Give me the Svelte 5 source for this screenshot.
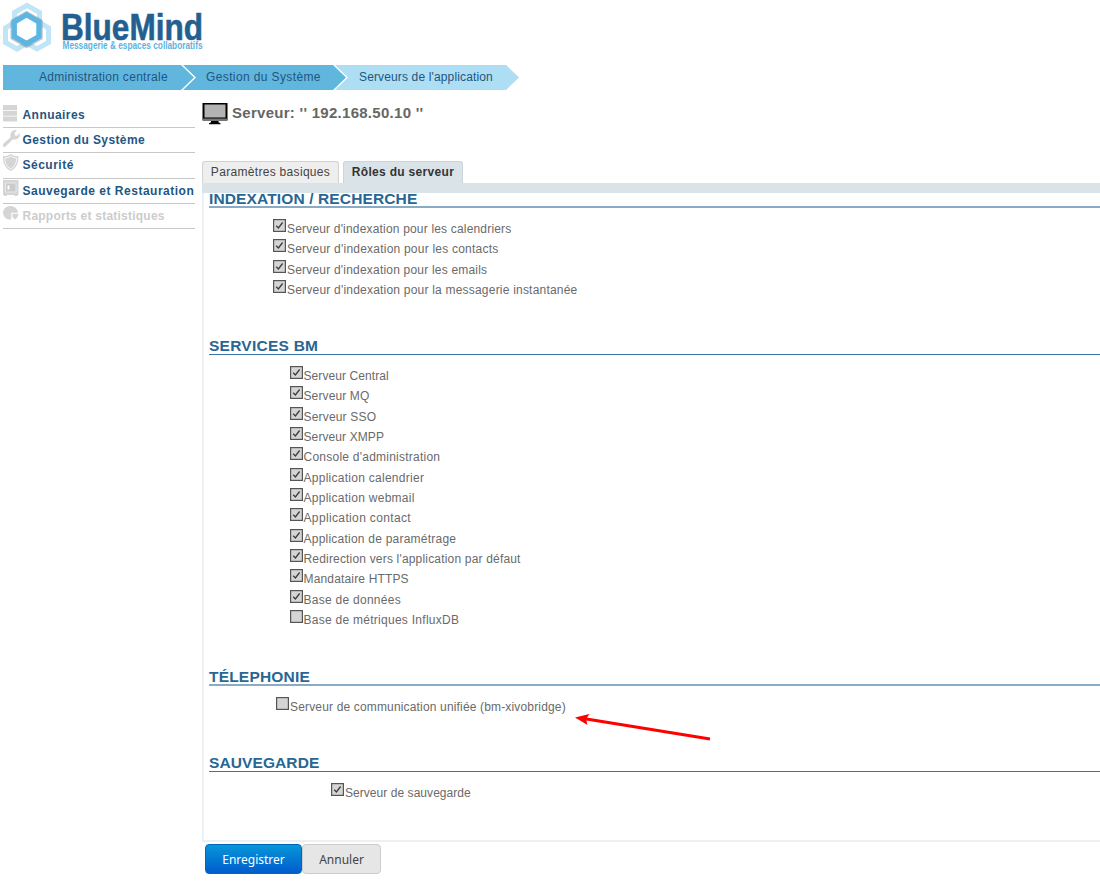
<script>
  const menu = [
    { icon: 'list', label: 'Annuaires', ls: 0.45 },
    { icon: 'wrench', label: 'Gestion du Système', ls: 0.4 },
    { icon: 'shield', label: 'Sécurité', ls: 0.5 },
    { icon: 'safe', label: 'Sauvegarde et Restauration', ls: 0.5 },
    { icon: 'pie', label: 'Rapports et statistiques', ls: 0.23, off: true }
  ];
  // Each item: label, checked, letter spacing in px
  const sections = [
    { title: 'INDEXATION / RECHERCHE', cls: 'index', ls: 0.13, items: [
      ["Serveur d'indexation pour les calendriers", true, 0.18],
      ["Serveur d'indexation pour les contacts", true, 0.22],
      ["Serveur d'indexation pour les emails", true, 0.2],
      ["Serveur d'indexation pour la messagerie instantanée", true, 0.21]
    ] },
    { title: 'SERVICES BM', cls: 'services', ls: 0.25, items: [
      ['Serveur Central', true, 0.08],
      ['Serveur MQ', true, 0.12],
      ['Serveur SSO', true, 0.18],
      ['Serveur XMPP', true, 0.1],
      ["Console d'administration", true, 0.24],
      ['Application calendrier', true, 0.27],
      ['Application webmail', true, 0.27],
      ['Application contact', true, 0.36],
      ['Application de paramétrage', true, 0.23],
      ["Redirection vers l'application par défaut", true, 0.18],
      ['Mandataire HTTPS', true, 0.16],
      ['Base de données', true, 0.27],
      ['Base de métriques InfluxDB', false, 0.27]
    ] },
    { title: 'TÉLEPHONIE', cls: 'phone', ls: 0.2, items: [
      ['Serveur de communication unifiée (bm-xivobridge)', false, 0.16]
    ] },
    { title: 'SAUVEGARDE', cls: 'backup', ls: 0.1, items: [['Serveur de sauvegarde', true, 0.05]] }
  ];
</script>

<div class="page">
  <header>
    <svg width="230" height="62" viewBox="0 0 230 62">
      <g fill="none" stroke="#bfe5f6" stroke-width="5">
        <path d="M27 5.300 39.500 12.500V27L27 34 14.500 27V12.500Z" />
        <path d="M17 21 28 28V42.500L17 49 5.500 42.500V28Z" />
        <path d="M37 21 48.500 28V42.500L37 49 25.500 42.500V28Z" />
      </g>
      <path d="M26.600 14.800 39.200 22V37L26.600 44.300 14 37V22Z" fill="none" stroke="#61717c" stroke-opacity=".4" stroke-width="7" />
      <path d="M26.600 14.800 38.900 22V36.500L26.600 43.500 14.300 36.500V22Z" fill="#fff" stroke="#5db5e2" stroke-width="5.200" />
      <text x="61" y="39.500" class="brand" textLength="142" lengthAdjust="spacingAndGlyphs">BlueMind</text>
      <text x="62.500" y="49.300" class="slogan" textLength="140" lengthAdjust="spacingAndGlyphs">Messagerie &amp; espaces collaboratifs</text>
    </svg>
  </header>

  <nav class="crumbs">
    <span class="crumb one">Administration centrale</span>
    <span class="crumb two">Gestion du Système</span>
    <span class="crumb three">Serveurs de l'application</span>
  </nav>

  <div class="columns">
    <aside>
      {#each menu as m}
        <div class="entry" class:off={m.off}>
          <svg width="18" height="19" viewBox="0 0 18 19" fill="#d5d5d5">
            {#if m.icon === 'list'}
              <path d="M0 0h14v5.300H0zM0 6h14v4.800H0zM0 11.500h14v5H0z" />
            {:else if m.icon === 'wrench'}
              <path d="M.6 17.800Q-.5 17 0 15L7.600 8.200Q6.700 4.500 9.200 2.300 11.400.500 14 1.200L11.400 4.100 12 6.400 14.200 6.700 16.700 4Q17.400 7.200 15 9.300 12.700 11 10 10.300L2.500 17.600Q1.500 18.300.6 17.800Z" />
            {:else if m.icon === 'shield'}
              <path d="M7.700 0Q10.500 2.300 15.400 2.300 15.900 13 7.700 17-.5 13 0 2.300 4.700 2.300 7.700 0Z" />
              <path d="M7.700 2.200Q10.200 3.900 13.700 4 13.600 11.800 7.700 15 1.800 11.800 1.700 4 5.200 3.900 7.700 2.200Z" fill="none" stroke="#fff" stroke-width=".8" />
            {:else if m.icon === 'safe'}
              <path d="M0 0h15.500v15H0z" />
              <path d="M2.500 3h10.500v9H2.500z" fill="#cbcbcb" stroke="#efefef" stroke-width=".8" />
              <path d="M4.500 5.500h2v4h-2z" fill="#fff" />
              <path d="M1 15h3v1H1zM11.500 15h3v1h-3z" />
            {:else}
              <path d="M7.200 1A7.300 7 0 0 1 15 7.700H8.200V14.500A7 6.800 0 1 1 7.200 1Z" />
              <path d="M9.300 8.700H15.500Q15.200 12.500 11.800 14.500L9.300 11.500Z" />
            {/if}
          </svg>
          <span style:letter-spacing="{m.ls}px">{m.label}</span>
        </div>
      {/each}
    </aside>

    <main>
      <h1>
        <svg width="26" height="23" viewBox="0 0 26 23">
          <path d="M.5 0h25v17H.5z" fill="#000" />
          <path d="M2.500 1.500h21v13h-21z" fill="#b3b3b3" />
          <path d="M.5 15.500h25V18H.5z" fill="#777" />
          <path d="M9 18h7.500v1.300l2 1v1H7v-1l2-1z" fill="#000" />
        </svg>
        <span>Serveur: '' 192.168.50.10 ''</span>
      </h1>
      <div class="tabs">
        <div class="tab">Paramètres basiques</div>
        <div class="tab active">Rôles du serveur</div>
      </div>
      <div class="strip"></div>
      <div class="panel">
        {#each sections as s}
          <section class={s.cls}>
            <h2 style:letter-spacing="{s.ls}px">{s.title}</h2>
            <div class="items">
              {#each s.items as [label, on, ls]}
                <div class="item">
                  <svg width="13" height="13" viewBox="0 0 13 13">
                    <rect x=".6" y=".6" width="11.800" height="11.800" fill="#d5d5d5" stroke="#555" stroke-width="1.200" />
                    {#if on}<path d="M3.200 6.700 5.400 8.900 9.600 3.500" fill="none" stroke="#3c3c3c" stroke-width="1.300" />{/if}
                  </svg>
                  <span style:letter-spacing="{ls}px">{label}</span>
                </div>
              {/each}
            </div>
            {#if s.cls === 'phone'}
              <svg class="arrow" width="140" height="32" viewBox="0 0 140 32">
                <path d="M10 4.800 135 25" stroke="#f00" stroke-width="3" />
                <path d="M0 3.500 14.500 0 11 5 12.500 11Z" fill="#f00" />
              </svg>
            {/if}
          </section>
        {/each}
      </div>
      <div class="buttons">
        <button class="save">Enregistrer</button><button class="cancel">Annuler</button>
      </div>
    </main>
  </div>
</div>

<style>
  :global(body) { background: #fff; overflow: hidden; }
  .page { width: 1100px; height: 892px; overflow: hidden; font: 12px "Liberation Sans", Arial, sans-serif; color: #6a6a6a; }
  header { height: 65px; }
  header svg { display: block; overflow: visible; }
  .brand { font: bold 37px "Liberation Sans", sans-serif; fill: #245f8f; stroke: #245f8f; stroke-width: .6px; }
  .slogan { font: bold 10.500px "Liberation Sans", sans-serif; fill: #5db3df; }
  .crumbs { display: flex; height: 25px; margin-left: 3px; line-height: 25px; color: #22557f; }
  .crumb { box-sizing: border-box; height: 25px; white-space: nowrap; background: #61b6de; }
  .one { width: 191px; padding-left: 36px; letter-spacing: .3px; clip-path: polygon(0 0, 178px 0, 191px 50%, 178px 100%, 0 100%); }
  .two { width: 163px; margin-left: -11px; padding-left: 23px; letter-spacing: .38px; clip-path: polygon(0 0, 150px 0, 163px 50%, 150px 100%, 0 100%, 13px 50%); }
  .three { width: 184px; margin-left: -11px; padding-left: 24px; letter-spacing: .14px; background: #addef3; clip-path: polygon(0 0, 171px 0, 184px 50%, 171px 100%, 0 100%, 13px 50%); }
  .columns { display: flex; }
  aside { width: 192px; margin-left: 3px; padding-top: 13px; flex: none; }
  .entry { display: flex; height: 25.200px; box-sizing: border-box; border-bottom: 1px solid #c8c8c8; color: #1f5682; font-weight: bold; white-space: nowrap; }
  .entry svg { flex: none; margin-right: 1.500px; margin-top: 2px; }
  .entry:not(:first-child) svg { margin-top: 1px; }
  .entry span { line-height: 25px; }
  .entry.off { color: #ccc; }
  main { width: 898px; margin-left: 7px; flex: none; }
  h1 { display: flex; height: 71px; box-sizing: border-box; margin: 0; padding-top: 12px; font-size: 15px; line-height: 21px; color: #666; letter-spacing: .28px; }
  h1 svg { margin-right: 4px; margin-top: 1px; }
  .tabs { display: flex; gap: 4px; height: 22px; }
  .tab { box-sizing: border-box; width: 137px; height: 22px; border: 1px solid #d2d2d2; border-bottom: 0; border-radius: 3px 3px 0 0; background: #eee; color: #444; text-align: center; line-height: 21px; letter-spacing: .31px; white-space: nowrap; }
  .tab.active { width: 120px; background: #dae3e8; border-color: #ccd5da; color: #333; font-weight: bold; }
  .strip { height: 10px; background: #dae3e8; }
  .panel { box-sizing: border-box; height: 649px; display: flex; flex-direction: column; border-left: 2px solid #ebf0f4; border-bottom: 2px solid #ebf0f4; padding-left: 5px; }
  section { position: relative; }
  h2 { box-sizing: border-box; height: 18px; margin: 0; border-bottom: 1px solid #3a76a2; color: #286694; font-size: 15.500px; line-height: 18px; white-space: nowrap; }
  .index h2, .phone h2 { border-bottom: 2px solid #8aabc5; }
  .index { height: 147px; margin-top: -3px; }
  .services { height: 331px; }
  .phone { height: 86px; }
  .index .items { padding-left: 64px; }
  .services .items { padding-left: 80.500px; }
  .phone .items { padding-left: 67px; }
  .backup .items { padding-left: 122px; }
  .items { padding-top: 11px; }
  .item { display: flex; height: 20.350px; white-space: nowrap; }
  .item svg { flex: none; margin-right: 1px; }
  .item span { line-height: 20px; }
  .arrow { position: absolute; left: 365.500px; top: 45.500px; }
  .buttons { display: flex; padding: 2px 0 0 3px; }
  button { box-sizing: border-box; height: 30px; padding: 0; border: 1px solid #ccc; border-radius: 4px; font: 12px "Noto Sans", sans-serif; }
  .save { width: 97px; color: #fff; border-color: #0068b8; background: linear-gradient(#0796d9, #005ccc); }
  .cancel { width: 79px; color: #444; background: #e6e6e6; }
</style>
